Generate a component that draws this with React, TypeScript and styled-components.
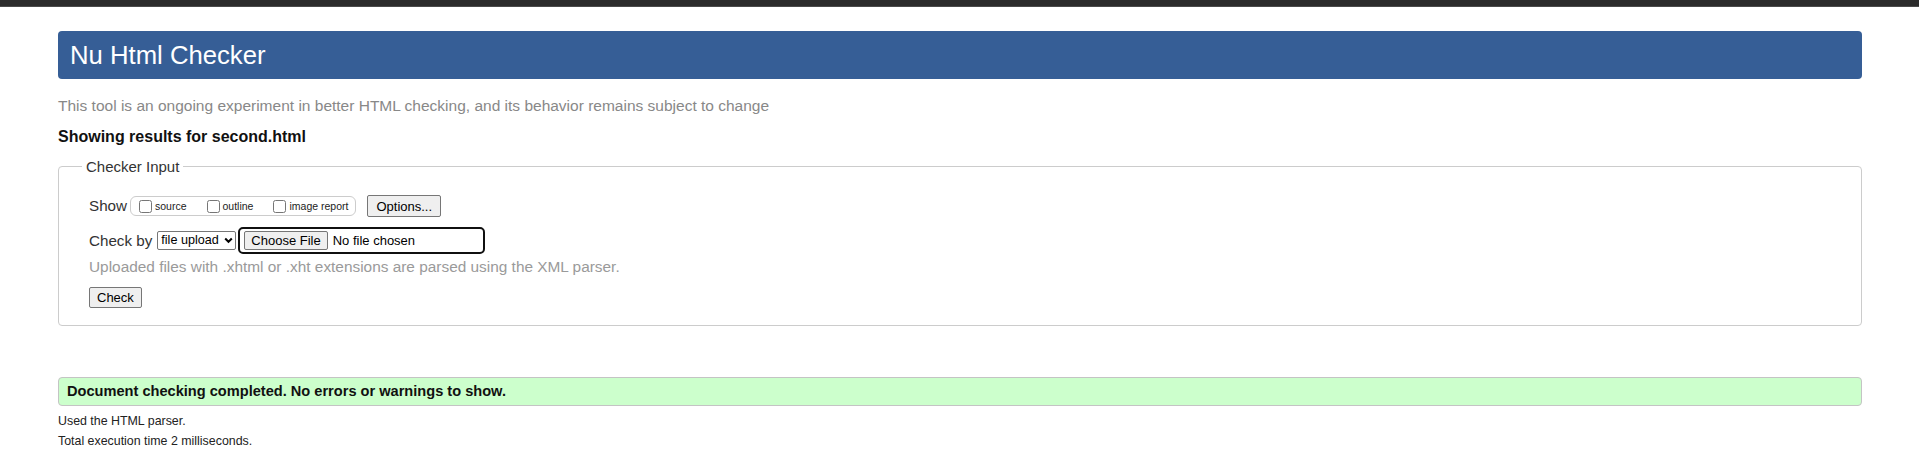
import React from "react";
import styled, { createGlobalStyle } from "styled-components";

const GlobalStyle = createGlobalStyle`
  html, body {
    margin: 0;
    padding: 0;
    background: #ffffff;
  }
  body {
    font-family: "Liberation Sans", Arial, sans-serif;
    color: #222222;
  }
`;

const TopBar = styled.div`
  height: 6px;
  background: #2b2b2b;
  border-bottom: 1px solid #4a4a4a;
`;

const Page = styled.main`
  padding: 0 57px 0 58px;
`;

const Title = styled.h1`
  margin: 24px 0 0;
  height: 48px;
  padding: 0 12px;
  background: #365e96;
  border-radius: 4px;
  color: #ffffff;
  font-size: 25.7px;
  font-weight: normal;
  line-height: 48px;
`;

const Tagline = styled.p`
  margin: 17px 0 0;
  font-size: 15.5px;
  line-height: 20px;
  color: #888888;
`;

const ResultsFor = styled.p`
  margin: 11px 0 0;
  font-size: 16px;
  line-height: 20px;
  font-weight: bold;
  color: #111111;
`;

const Fieldset = styled.fieldset`
  margin: 10px 0 0;
  padding: 19px 30px 17px;
  border: 1px solid #cccccc;
  border-radius: 4px;
  min-width: 0;
`;

const Legend = styled.legend`
  margin-left: -7px;
  padding: 0 4px;
  font-size: 15px;
  line-height: 19px;
  color: #333333;
`;

const ShowRow = styled.div`
  display: flex;
  align-items: center;
  height: 22px;
`;

const CheckByRow = styled.div`
  display: flex;
  align-items: center;
  height: 27px;
  margin-top: 10px;
`;

const FieldLabel = styled.span`
  font-size: 15.2px;
  line-height: 18px;
  color: #333333;
`;

const ShowGroup = styled.span`
  display: inline-flex;
  align-items: center;
  gap: 20px;
  height: 18px;
  margin-left: 3px;
  padding: 0 7px 0 8px;
  border: 1px solid #cccccc;
  border-radius: 6px;
`;

const Option = styled.label`
  display: inline-flex;
  align-items: center;
  gap: 3px;
  font-size: 10.5px;
  line-height: 13px;
  color: #222222;
`;

const Checkbox = styled.input`
  width: 13px;
  height: 13px;
  margin: 0;
`;

const Button = styled.button<{ $height: number; $padX: number }>`
  height: ${(p) => p.$height}px;
  padding: 0 ${(p) => p.$padX}px;
  font-family: "Liberation Sans", Arial, sans-serif;
  font-size: 13px;
  line-height: 1;
  color: #000000;
  background: #efefef;
  border: 1px solid #767676;
  border-radius: 2px;
`;

const OptionsButton = styled(Button)`
  margin-left: 11px;
`;

const SelectWrap = styled.span`
  position: relative;
  display: inline-flex;
  margin-left: 5px;
`;

const Select = styled.select`
  appearance: none;
  -webkit-appearance: none;
  box-sizing: border-box;
  width: 79px;
  height: 19px;
  margin: 0;
  padding: 0 12px 0 3px;
  font-family: "Liberation Sans", Arial, sans-serif;
  font-size: 12.6px;
  line-height: 17px;
  color: #000000;
  background: #ffffff;
  border: 1px solid #767676;
  border-radius: 2px;
`;

const Chevron = styled.svg`
  position: absolute;
  right: 3px;
  top: 6px;
  width: 9px;
  height: 7px;
  pointer-events: none;
`;

const FilePicker = styled.div`
  display: flex;
  align-items: center;
  box-sizing: border-box;
  width: 247px;
  height: 27px;
  margin-left: 2px;
  padding: 0 4px;
  border: 2px solid #101010;
  border-radius: 5px;
`;

const FileStatus = styled.span`
  margin-left: 5px;
  font-size: 13px;
  color: #000000;
`;

const Hint = styled.p`
  margin: 4px 0 0;
  font-size: 15.4px;
  line-height: 18px;
  color: #9a9a9a;
`;

const SubmitRow = styled.div`
  display: flex;
  margin-top: 11px;
`;

const Status = styled.div`
  margin-top: 51px;
  height: 27px;
  padding: 0 8px;
  background: #ccffcc;
  border: 1px solid #c4c4c4;
  border-radius: 4px;
  font-size: 14.6px;
  font-weight: bold;
  line-height: 27px;
  color: #111111;
`;

const Details = styled.div`
  margin-top: 6px;
`;

const Detail = styled.p`
  margin: 0;
  font-size: 12.4px;
  line-height: 19.5px;
  color: #222222;
`;

export default function App() {
  return (
    <>
      <GlobalStyle />
      <TopBar />
      <Page>
        <Title>Nu Html Checker</Title>
        <Tagline>
          This tool is an ongoing experiment in better HTML checking, and its behavior remains subject to change
        </Tagline>
        <ResultsFor>Showing results for second.html</ResultsFor>
        <Fieldset>
          <Legend>Checker Input</Legend>
          <ShowRow>
            <FieldLabel>Show</FieldLabel>
            <ShowGroup>
              <Option>
                <Checkbox type="checkbox" />
                source
              </Option>
              <Option>
                <Checkbox type="checkbox" />
                outline
              </Option>
              <Option>
                <Checkbox type="checkbox" />
                image report
              </Option>
            </ShowGroup>
            <OptionsButton type="button" $height={22} $padX={8}>
              Options...
            </OptionsButton>
          </ShowRow>
          <CheckByRow>
            <FieldLabel>Check by</FieldLabel>
            <SelectWrap>
              <Select defaultValue="file">
                <option value="address">address</option>
                <option value="file">file upload</option>
                <option value="text">text input</option>
              </Select>
              <Chevron viewBox="0 0 9 7" aria-hidden="true">
                <path d="M1.2 1.5 L4.5 4.8 L7.8 1.5" fill="none" stroke="#000" strokeWidth="2" />
              </Chevron>
            </SelectWrap>
            <FilePicker>
              <Button type="button" $height={19} $padX={6}>
                Choose File
              </Button>
              <FileStatus>No file chosen</FileStatus>
            </FilePicker>
          </CheckByRow>
          <Hint>Uploaded files with .xhtml or .xht extensions are parsed using the XML parser.</Hint>
          <SubmitRow>
            <Button type="button" $height={21} $padX={7}>
              Check
            </Button>
          </SubmitRow>
        </Fieldset>
        <Status>Document checking completed. No errors or warnings to show.</Status>
        <Details>
          <Detail>Used the HTML parser.</Detail>
          <Detail>Total execution time 2 milliseconds.</Detail>
        </Details>
      </Page>
    </>
  );
}
